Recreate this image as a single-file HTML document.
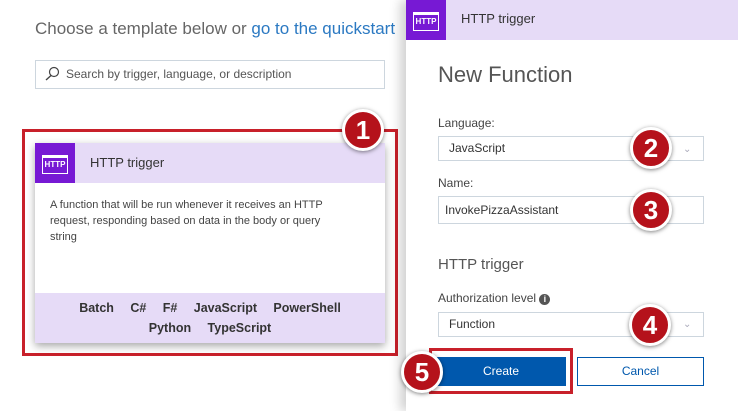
<!DOCTYPE html><html><head><style>
body{margin:0;width:738px;height:411px;overflow:hidden;background:#fff;font-family:"Liberation Sans",sans-serif;position:relative;color:#333}
.a{position:absolute}
.badge{position:absolute;width:36px;height:36px;border-radius:50%;background:#b5121b;border:3px solid #fff;box-shadow:0 1px 4px rgba(0,0,0,.5);color:#fff;font-weight:bold;font-size:26px;text-align:center;line-height:36px}
.ic{background:#7719d4}
.ic span{position:absolute;left:7px;top:12px;width:24px;height:15px;border:1.5px solid #fff;border-top-width:3px;color:#fff;font-size:8px;font-weight:bold;line-height:14px;text-align:center}
.lbl{font-size:12px;color:#444}
.inp{border:1px solid #cdd6de;font-size:12px;color:#333;box-sizing:border-box;padding-left:10px}
</style></head><body>
<div class="a" style="left:35px;top:19px;font-size:17px;color:#666;white-space:nowrap">Choose a template below or <span style="color:#2b79c2">go to the quickstart</span></div>
<div class="a inp" style="left:35px;top:60px;width:350px;height:29px;line-height:27px;padding-left:30px;color:#555">Search by trigger, language, or description</div>
<svg class="a" style="left:44px;top:66px" width="16" height="16"><circle cx="10" cy="6" r="4.5" fill="none" stroke="#444" stroke-width="1.2"/><line x1="7" y1="9.5" x2="2" y2="14" stroke="#444" stroke-width="1.4"/></svg>
<div class="a" style="left:22px;top:129px;width:370px;height:221px;border:3px solid #c8202a"></div>
<div class="a" style="left:35px;top:143px;width:350px;height:200px;background:#fff;box-shadow:0 3px 8px rgba(0,0,0,.35)">
<div class="a" style="left:0;top:0;width:350px;height:40px;background:#e6dbf7"></div>
<div class="a ic" style="left:0;top:0;width:40px;height:40px"><span>HTTP</span></div>
<div class="a" style="left:55px;top:12px;font-size:13px;color:#333">HTTP trigger</div>
<div class="a" style="left:15px;top:54px;width:290px;font-size:11px;line-height:16px;color:#444">A function that will be run whenever it receives an HTTP request, responding based on data in the body or query string</div>
<div class="a" style="left:0;top:150px;width:350px;height:50px;background:#e6dbf7;font-size:12.5px;font-weight:bold;color:#333;text-align:center;line-height:20px;padding-top:5px;box-sizing:border-box;word-spacing:2px">Batch&nbsp;&nbsp; C#&nbsp;&nbsp; F#&nbsp;&nbsp; JavaScript&nbsp;&nbsp; PowerShell<br>Python&nbsp;&nbsp; TypeScript</div>
</div>
<div class="badge" style="left:342px;top:109px">1</div>
<div class="a" style="left:406px;top:0;width:332px;height:411px;background:#fff;box-shadow:-6px 0 10px rgba(0,0,0,.18)"></div>
<div class="a" style="left:406px;top:0;width:332px;height:40px;background:#e6dbf7"></div>
<div class="a ic" style="left:406px;top:0;width:40px;height:40px"><span>HTTP</span></div>
<div class="a" style="left:461px;top:11px;font-size:13px;color:#333">HTTP trigger</div>
<div class="a" style="left:438px;top:62px;font-size:22px;color:#555">New Function</div>
<div class="a lbl" style="left:438px;top:116px">Language:</div>
<div class="a inp" style="left:438px;top:136px;width:266px;height:25px;line-height:23px">JavaScript</div>
<div class="a lbl" style="left:438px;top:176px">Name:</div>
<div class="a inp" style="left:438px;top:196px;width:266px;height:28px;line-height:26px;padding-left:6px">InvokePizzaAssistant</div>
<div class="a" style="left:438px;top:256px;font-size:15px;color:#555">HTTP trigger</div>
<div class="a lbl" style="left:438px;top:291px">Authorization level <span style="display:inline-block;width:11px;height:11px;border-radius:50%;background:#555;color:#fff;font-size:9px;text-align:center;line-height:11px;font-weight:bold">i</span></div>
<div class="a inp" style="left:438px;top:312px;width:266px;height:25px;line-height:23px">Function</div>
<div class="a" style="left:683px;top:144px;color:#aab;font-size:10px">&#8964;</div>
<div class="a" style="left:683px;top:319px;color:#aab;font-size:10px">&#8964;</div>
<div class="a" style="left:429px;top:348px;width:138px;height:40px;border:3px solid #c8202a"></div>
<div class="a" style="left:436px;top:357px;width:130px;height:29px;background:#0058ad;color:#fff;font-size:12px;text-align:center;line-height:29px">Create</div>
<div class="a" style="left:577px;top:357px;width:127px;height:29px;border:1px solid #0058ad;box-sizing:border-box;color:#0058ad;font-size:12px;text-align:center;line-height:27px">Cancel</div>
<div class="badge" style="left:630px;top:127px">2</div>
<div class="badge" style="left:630px;top:189px">3</div>
<div class="badge" style="left:629px;top:304px">4</div>
<div class="badge" style="left:401px;top:351px">5</div>
</body></html>
